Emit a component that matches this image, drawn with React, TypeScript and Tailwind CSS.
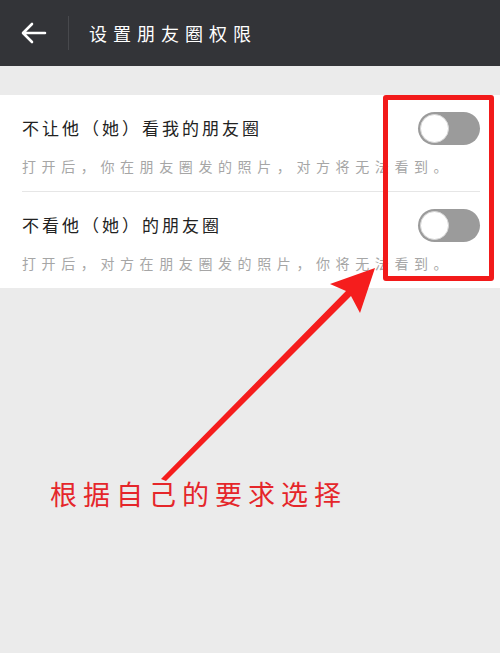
import React from "react";

const CJK = { fontFamily: '"Noto Sans CJK SC", "Noto Sans", sans-serif' };

function Toggle() {
  return (
    <div className="flex h-[33px] w-[62px] shrink-0 items-center rounded-full bg-[#9b9b9b] p-[2px]">
      <div className="h-[29px] w-[29px] rounded-full border border-[#d6d6d6] bg-white" />
    </div>
  );
}

function Row({ title, desc, last }: { title: string; desc: string; last?: boolean }) {
  return (
    <div
      className={`ml-[22px] mr-[20px] flex flex-col pt-[21px] pb-[15px] ${
        last ? "" : "border-b border-[#e6e6e6]"
      }`}
    >
      <div className="flex h-[24px] items-center justify-between">
        <span className="text-[17px] leading-[24px] tracking-[3px] text-[#222]">{title}</span>
        <Toggle />
      </div>
      <div className="mt-[16px] text-[14px] leading-[20px] tracking-[5.6px] text-[#a6a6a6]">{desc}</div>
    </div>
  );
}

export default function App() {
  return (
    <div className="relative h-[653px] w-[500px] overflow-hidden bg-[#ebebeb]" style={CJK}>
      <div className="flex h-[66px] items-center bg-[#333438]">
        <div className="flex w-[68px] items-center justify-center">
          <svg width="26" height="22" viewBox="0 0 26 22" fill="none" stroke="white" strokeWidth="2.6" strokeLinecap="round" strokeLinejoin="round">
            <path d="M24 11H3M11 2L2 11l9 9" />
          </svg>
        </div>
        <div className="h-[34px] w-px bg-[#48494d]" />
        <span className="ml-[20px] text-[18px] tracking-[6px] text-white">设置朋友圈权限</span>
      </div>

      <div className="mt-[29px] bg-white">
        <Row title="不让他（她）看我的朋友圈" desc="打开后，你在朋友圈发的照片，对方将无法看到。" />
        <Row title="不看他（她）的朋友圈" desc="打开后，对方在朋友圈发的照片，你将无法看到。" last />
      </div>

      <div className="absolute left-[383px] top-[95px] h-[186px] w-[111px] rounded-[3px] border-[5px] border-[#f21a1a]" />

      <svg className="absolute left-0 top-0" width="500" height="653" viewBox="0 0 500 653">
        <path d="M161 479 L166 481 L351 296 L360 313 L375 268 L330 284 L346 291 Z" fill="#f51d1d" />
      </svg>

      <div className="absolute left-[50px] top-[474px] text-[27px] tracking-[6px] text-[#e5262a]">
        根据自己的要求选择
      </div>
    </div>
  );
}
